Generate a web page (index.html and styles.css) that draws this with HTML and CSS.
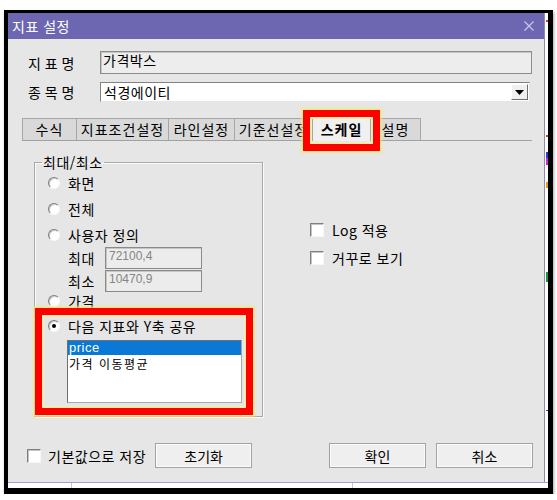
FILE: index.html
```html
<!DOCTYPE html>
<html lang="ko">

<head>
    <meta charset="UTF-8">
    <title>지표 설정</title>
    <link rel="stylesheet" href="styles.css">
</head>

<body>
    <div class="frame">
        <div class="main">
            <div class="dialog">
                <div class="titlebar">
                    <span class="title">지표 설정</span>
                    <svg class="close" width="10" height="10" viewBox="0 0 10 10">
                        <path d="M0.5 0.5 L9.5 9.5 M9.5 0.5 L0.5 9.5" stroke="#cbc7ea" stroke-width="1.2" fill="none" />
                    </svg>
                </div>

                <div class="body">
                    <div class="field-row">
                        <span class="label">지 표 명</span>
                        <div class="textbox">가격박스</div>
                    </div>
                    <div class="field-row second">
                        <span class="label">종 목 명</span>
                        <div class="combo">
                            <span class="combo-text">석경에이티</span>
                            <span class="combo-btn"><svg width="9" height="5" viewBox="0 0 9 5"><path d="M0 0 H9 L4.5 5 Z" fill="#000" /></svg></span>
                        </div>
                    </div>

                    <!-- tab strip -->
                    <div class="tabs">
                        <div class="tab w-54">수식</div>
                        <div class="tab w-92">지표조건설정</div>
                        <div class="tab w-66">라인설정</div>
                        <div class="tab w-78">기준선설정</div>
                        <div class="tab active w-58">스케일<span class="mark mark-tab"></span></div>
                        <div class="tab w-50">설명</div>
                    </div>

                    <div class="panel">
                        <fieldset class="group">
                            <legend>최대/최소</legend>
                            <div class="opt"><span class="radio"></span>화면</div>
                            <div class="opt gap"><span class="radio"></span>전체</div>
                            <div class="opt gap"><span class="radio"></span>사용자 정의</div>
                            <div class="sub first">
                                <span class="sub-label">최대</span>
                                <div class="numbox">72100,4</div>
                            </div>
                            <div class="sub">
                                <span class="sub-label">최소</span>
                                <div class="numbox">10470,9</div>
                            </div>
                            <div class="opt"><span class="radio"></span>가격</div>
                            <div class="share">
                                <div class="opt"><span class="radio checked"></span>다음 지표와 Y축 공유</div>
                                <div class="listbox">
                                    <div class="item selected">price</div>
                                    <div class="item">가격 이동평균</div>
                                </div>
                                <span class="mark mark-share"></span>
                            </div>
                        </fieldset>

                        <div class="options">
                            <div class="check-row"><span class="check"></span>Log 적용</div>
                            <div class="check-row gap"><span class="check"></span>거꾸로 보기</div>
                        </div>
                    </div>

                    <div class="footer">
                        <span class="check save"></span>
                        <span class="save-label">기본값으로 저장</span>
                        <button class="btn reset">초기화</button>
                        <span class="spacer"></span>
                        <button class="btn">확인</button>
                        <button class="btn cancel">취소</button>
                    </div>
                </div>
            </div>

            <!-- bits of the chart window behind -->
            <div class="edge">
                <span class="tick red" style="top:7px"></span>
                <span class="tick red" style="top:122px"></span>
                <span class="tick blue" style="top:139px;height:6px"></span>
                <span class="tick magenta" style="top:145px;height:7px"></span>
                <span class="tick orange" style="top:169px;height:6px"></span>
                <span class="tick green" style="top:259px;height:10px"></span>
                <span class="tick blue" style="top:397px;height:1px"></span>
            </div>
        </div>

        <div class="statusbar">
            <span class="cell c1"></span>
            <span class="cell c2"></span>
        </div>
    </div>
</body>

</html>
```

FILE: styles.css
```css
* {
    box-sizing: border-box;
}

body {
    margin: 0;
    background: #fff;
    font-family: "Noto Sans CJK KR", "Noto Sans", sans-serif;
    font-size: 14px;
    letter-spacing: .5px;
    color: #000;
}

.frame {
    margin: 10px 0 0 4px;
    width: 549px;
    height: 484px;
    border-style: solid;
    border-color: #000;
    border-width: 3px 5px 6px 4px;
    box-shadow: 1px 2px 3px rgba(0, 0, 0, .35);
    background: #fff;
    display: flex;
    flex-direction: column;
}

.main {
    display: flex;
    height: 469px;
}

.dialog {
    width: 537px;
    background: #e6e6e6;
    border-right: 1px solid #8f8ca8;
    display: flex;
    flex-direction: column;
}

.titlebar {
    height: 26px;
    flex: none;
    background: #6d67b1;
    color: #fff;
    display: flex;
    align-items: center;
    justify-content: space-between;
    padding: 0 10px 0 4px;
}

.close {
    display: block;
}

.body {
    flex: 1;
    padding: 12px 12px 0 14px;
}

.field-row {
    display: flex;
    align-items: center;
    padding-left: 6px;
}

.field-row.second {
    margin-top: 8px;
}

.label {
    width: 72px;
    line-height: 16px;
    letter-spacing: 0;
}

.textbox {
    flex: 1;
    height: 23px;
    background: #ededed;
    border: 1px solid #8c8c8c;
    box-shadow: inset 1px 1px 0 #c6c6c6;
    padding: 0 2px;
    line-height: 17px;
}

.combo {
    flex: 1;
    height: 20px;
    margin-right: 2px;
    background: #fff;
    border: 1px solid;
    border-color: #828282 #e6e6e6 #e6e6e6 #828282;
    display: flex;
    align-items: center;
    justify-content: space-between;
    padding: 0 1px 0 3px;
}

.combo-text {
    line-height: 16px;
}

.combo-btn {
    width: 17px;
    height: 16px;
    background: #f0f0f0;
    border: 1px solid;
    border-color: #fff #6e6e6e #6e6e6e #fff;
    display: flex;
    align-items: center;
    justify-content: center;
}

/* tab strip */
.tabs {
    margin-top: 16px;
    height: 23px;
    display: flex;
    align-items: flex-start;
    border-bottom: 1px solid #a2a2a2;
}

.tab {
    position: relative;
    height: 22px;
    margin-right: -1px;
    background: #d9d9d9;
    border: 1px solid #a6a6a6;
    border-bottom: none;
    text-align: center;
    line-height: 20px;
    letter-spacing: 1px;
}

.tab.active {
    z-index: 1;
    height: 25px;
    margin-top: -2px;
    background: #f0f0f0;
    font-weight: bold;
    line-height: 24px;
}

.w-54 { width: 55px; }
.w-92 { width: 93px; }
.w-66 { width: 67px; }
.w-78 { width: 79px; }
.w-58 { width: 59px; }
.w-50 { width: 51px; }

/* red marker boxes drawn over the dialog */
.mark {
    position: absolute;
    border: 7px solid #ff0000;
    box-shadow: 0 0 2px 2px rgba(240, 232, 120, .75), inset 0 0 0 2px #f4efb2;
    z-index: 2;
}

.mark-tab {
    left: -10px;
    top: -7px;
    width: 77px;
    height: 41px;
}

.mark-share {
    left: -13px;
    top: -2px;
    width: 218px;
    height: 107px;
}

.panel {
    display: flex;
    align-items: flex-start;
    padding: 14px 0 0 12px;
}

.group {
    width: 229px;
    margin: 0;
    padding: 5px 0 13px 13px;
    border: 1px solid #a9a9a9;
    box-shadow: 1px 1px 0 #fafafa, inset 1px 1px 0 #fafafa;
}

.group legend {
    margin-left: -6px;
    padding: 0 1px;
    line-height: 14px;
}

.opt {
    display: flex;
    align-items: center;
    gap: 8px;
    height: 18px;
    line-height: 16px;
}

.opt.gap {
    margin-top: 8px;
}

.radio {
    position: relative;
    width: 12px;
    height: 12px;
    border-radius: 50%;
    border: 1px solid;
    border-color: #7e7e7e #f8f8f8 #f8f8f8 #7e7e7e;
    background: #fff;
    box-shadow: inset 1px 1px 0 #c8c8c8;
}

.radio.checked::after {
    content: "";
    position: absolute;
    left: 3px;
    top: 3px;
    width: 4px;
    height: 4px;
    border-radius: 50%;
    background: #000;
}

.sub {
    display: flex;
    align-items: center;
    padding-left: 20px;
    margin-top: 1px;
}

.sub.first {
    margin-top: 3px;
}

.sub-label {
    width: 37px;
    line-height: 16px;
}

.numbox {
    width: 97px;
    height: 22px;
    background: #ececec;
    border: 1px solid #8a8a8a;
    box-shadow: inset 1px 1px 0 #c6c6c6;
    padding: 1px 3px;
    font-family: "Liberation Sans", Arial, sans-serif;
    font-size: 12px;
    letter-spacing: 0;
    color: #858585;
    line-height: 14px;
}

.share {
    position: relative;
    padding-top: 7px;
}

.listbox {
    margin: 5px 0 0 19px;
    width: 175px;
    height: 63px;
    background: #fff;
    border: 1px solid;
    border-color: #6f6f6f #a8a8a8 #a8a8a8 #6f6f6f;
}

.item {
    line-height: 14px;
    padding: 2px 0 0 1px;
    font-size: 12px;
    letter-spacing: 1.5px;
}

.item.selected {
    height: 14px;
    padding-top: 0;
    background: #0a78d7;
    color: #fff;
    font-family: "Liberation Sans", Arial, sans-serif;
    font-size: 13px;
    letter-spacing: .5px;
}

.options {
    margin: 66px 0 0 47px;
}

.check-row {
    display: flex;
    align-items: center;
    gap: 8px;
    height: 18px;
    line-height: 16px;
}

.check-row.gap {
    margin-top: 10px;
}

.check {
    width: 14px;
    height: 14px;
    background: #fff;
    border: 1px solid;
    border-color: #7f7f7f #f6f6f6 #f6f6f6 #7f7f7f;
    box-shadow: inset 1px 1px 0 #c4c4c4;
}

.footer {
    margin-top: 26px;
    height: 25px;
    display: flex;
    align-items: center;
}

.check.save {
    margin-left: 5px;
}

.save-label {
    margin-left: 7px;
    line-height: 16px;
}

.btn {
    width: 97px;
    height: 25px;
    margin: 0;
    padding: 0;
    font: inherit;
    color: #000;
    background: #efefef;
    border: 1px solid #a3a3a3;
    box-shadow: inset 0 0 0 1px #fbfbfb;
}

.btn.reset {
    margin-left: 9px;
}

.btn.cancel {
    margin-left: 10px;
    margin-right: -1px;
}

.spacer {
    flex: 1;
}

.edge {
    position: relative;
    width: 3px;
    background: #fff;
}

.tick {
    position: absolute;
    left: 1px;
    width: 2px;
    height: 2px;
}

.red { background: #e8392f; }
.blue { background: #2a3fd8; }
.magenta { background: #d02bd0; }
.orange { background: #e89a1c; }
.green { background: #1e9a3a; }

.statusbar {
    flex: 1;
    display: flex;
    border-top: 1px solid #a29ed0;
}

.cell {
    border-right: 1px solid #c8c8c8;
}

.c1 { width: 64px; }
.c2 { width: 281px; }
```
